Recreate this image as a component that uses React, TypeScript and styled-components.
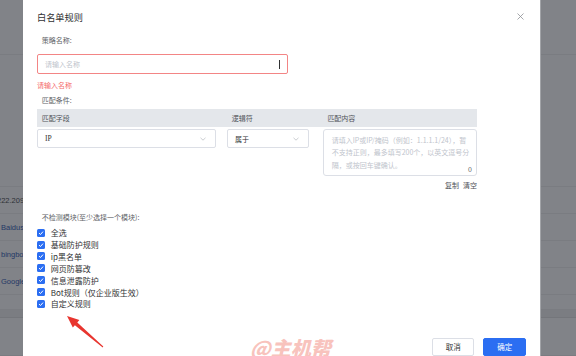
import React from "react";
import styled, { createGlobalStyle } from "styled-components";

const GlobalStyle = createGlobalStyle`
  html, body { margin: 0; padding: 0; }
  body {
    font-family: "Noto Sans CJK SC", "Noto Sans", sans-serif;
  }
  * { box-sizing: border-box; }
`;

const Page = styled.div`
  position: relative;
  display: flex;
  width: 576px;
  height: 356px;
  overflow: hidden;
  background: #818388;
`;

const Backdrop = styled.div<{ $w?: number; $edge?: boolean }>`
  flex: ${(p) => (p.$w ? `0 0 ${p.$w}px` : "1 1 auto")};
  display: flex;
  flex-direction: column;
  overflow: hidden;
  border-left: ${(p) => (p.$edge ? "1.5px solid #a2a4a8" : "none")};
`;

const BgRow = styled.div<{ $h: number; $dark?: boolean }>`
  flex: 0 0 ${(p) => p.$h}px;
  display: flex;
  align-items: center;
  gap: 2px;
  border-bottom: 1px solid rgba(0, 0, 0, 0.05);
  background: ${(p) => (p.$dark ? "rgba(0,0,0,0.04)" : "transparent")};
  font-family: "Liberation Sans", Arial, sans-serif;
  font-size: 7.5px;
  white-space: nowrap;
`;

const BgText = styled.span<{ $link?: boolean }>`
  color: ${(p) => (p.$link ? "#243866" : "#2e3136")};
  margin-left: ${(p) => (p.$link ? "0" : "-3px")};
`;

const BgIcon = styled.span`
  display: inline-block;
  width: 5px;
  height: 6px;
  margin-left: -3px;
  border: 1px solid #2a4c9a;
  border-radius: 1px;
`;

const Modal = styled.div`
  flex: 0 0 517px;
  display: flex;
  flex-direction: column;
  background: #ffffff;
  padding: 10px 14px 0 14px;
`;

const TitleRow = styled.div`
  display: flex;
  align-items: center;
  justify-content: space-between;
  height: 15px;
`;

const Title = styled.div`
  font-size: 9.2px;
  line-height: 15px;
  color: #303133;
`;

const CloseBtn = styled.span`
  display: inline-flex;
  width: 7px;
  height: 7px;
  margin: -3px 2px 0 0;
`;

const FieldLabel = styled.div<{ $mt: number }>`
  margin-top: ${(p) => p.$mt}px;
  padding-left: 4.7px;
  font-size: 7px;
  line-height: 10px;
  color: #606266;
`;

const NameInput = styled.div`
  margin-top: 9px;
  width: 251px;
  height: 20px;
  display: flex;
  align-items: center;
  justify-content: space-between;
  padding: 0 7px;
  border: 1px solid #f38585;
  border-radius: 2px;
`;

const Placeholder = styled.span`
  font-size: 7px;
  color: #c0c4cc;
`;

const Caret = styled.span`
  width: 1px;
  height: 9px;
  background: #303133;
`;

const ErrorText = styled.div`
  margin-top: 5.5px;
  font-size: 7px;
  line-height: 10px;
  color: #f56c6c;
`;

const Grid = styled.div`
  display: grid;
  grid-template-columns: 190px 95.7px 154.3px;
  width: 440px;
`;

const HeaderGrid = styled(Grid)`
  margin-top: 4px;
  height: 18px;
  align-items: center;
  background: #e4e7eb;
`;

const HeaderCell = styled.div`
  padding-left: 4.7px;
  font-size: 7px;
  color: #51545a;
`;

const RowGrid = styled(Grid)`
  margin-top: 2px;
  align-items: start;
`;

const Select = styled.div<{ $w: number }>`
  width: ${(p) => p.$w}px;
  height: 19px;
  display: flex;
  align-items: center;
  justify-content: space-between;
  padding: 0 9.5px 0 7px;
  border: 1px solid #dcdfe6;
  border-radius: 2px;
  font-size: 7px;
  color: #303133;
`;

const SerifValue = styled.span`
  font-family: "Liberation Serif", "Noto Sans CJK SC", serif;
  font-size: 7.5px;
`;

const ContentBox = styled.div`
  position: relative;
  height: 47px;
  padding: 3.5px 4px 0 8px;
  border: 1px solid #dcdfe6;
  border-radius: 3px;
`;

const HintLine = styled.div`
  font-size: 7px;
  line-height: 12.5px;
  color: #c0c4cc;
  white-space: nowrap;
`;

const Counter = styled.span`
  position: absolute;
  right: 4px;
  bottom: 1px;
  font-size: 7px;
  line-height: 10px;
  color: #606266;
`;

const Actions = styled.div`
  width: 440px;
  margin-top: 4px;
  display: flex;
  justify-content: flex-end;
  gap: 4px;
  font-size: 7px;
  line-height: 10px;
  color: #4d5056;
`;

const CheckList = styled.div`
  margin-top: 5px;
  display: flex;
  flex-direction: column;
`;

const CheckRow = styled.div`
  height: 11.9px;
  display: flex;
  align-items: center;
  gap: 5.5px;
  padding-left: 0.3px;
`;

const Box = styled.span`
  width: 8px;
  height: 8px;
  display: inline-flex;
  align-items: center;
  justify-content: center;
  background: #2b6ef2;
  border-radius: 1.5px;
`;

const CheckLabel = styled.span`
  font-size: 8px;
  color: #303133;
  white-space: nowrap;
`;

const Footer = styled.div`
  margin-top: 27.6px;
  display: flex;
  justify-content: flex-end;
  gap: 9px;
`;

const Button = styled.button<{ $primary?: boolean; $w: number }>`
  width: ${(p) => p.$w}px;
  height: 18px;
  padding: 0;
  font-family: inherit;
  font-size: 7.5px;
  border-radius: 2px;
  border: 1px solid ${(p) => (p.$primary ? "#2b6ef2" : "#dcdfe6")};
  background: ${(p) => (p.$primary ? "#2b6ef2" : "#ffffff")};
  color: ${(p) => (p.$primary ? "#ffffff" : "#303133")};
`;

const Watermark = styled.div`
  position: absolute;
  left: 250px;
  top: 337px;
  font-size: 20px;
  line-height: 22px;
  font-weight: 900;
  font-style: italic;
  color: #f8c3bd;
  white-space: nowrap;
  pointer-events: none;
`;

const ArrowSvg = styled.svg`
  position: absolute;
  left: 60px;
  top: 310px;
  pointer-events: none;
`;

const Chevron = () => (
  <svg width="6" height="4" viewBox="0 0 6 4">
    <path d="M0.5 0.8 L3 3.2 L5.5 0.8" fill="none" stroke="#b4b7bd" strokeWidth="0.7" />
  </svg>
);

const CheckMark = () => (
  <svg width="6" height="6" viewBox="0 0 6 6">
    <path d="M1 3.1 L2.5 4.5 L5 1.6" fill="none" stroke="#fff" strokeWidth="1" />
  </svg>
);

const modules = [
  "全选",
  "基础防护规则",
  "ip黑名单",
  "网页防篡改",
  "信息泄露防护",
  "Bot规则（仅企业版生效）",
  "自定义规则",
];

const bgRows: { h: number; text?: string; link?: boolean; dark?: boolean }[] = [
  { h: 55 },
  { h: 132 },
  { h: 27, text: "222.209.14" },
  { h: 27, text: "Baiduspider", link: true },
  { h: 27, text: "bingbot", link: true },
  { h: 27, text: "Googlebot", link: true },
  { h: 15 },
  { h: 8, dark: true },
  { h: 38 },
];

export default function App() {
  return (
    <>
      <GlobalStyle />
      <Page>
        <Backdrop $w={23}>
          {bgRows.map((r, i) => (
            <BgRow key={i} $h={r.h} $dark={r.dark}>
              {r.link && <BgIcon />}
              {r.text && <BgText $link={r.link}>{r.text}</BgText>}
            </BgRow>
          ))}
        </Backdrop>

        <Modal>
          <TitleRow>
            <Title>白名单规则</Title>
            <CloseBtn>
              <svg width="7" height="7" viewBox="0 0 7 7">
                <path d="M0.5 0.5 L6.5 6.5 M6.5 0.5 L0.5 6.5" stroke="#8e9196" strokeWidth="0.8" />
              </svg>
            </CloseBtn>
          </TitleRow>

          <FieldLabel $mt={10}>策略名称:</FieldLabel>
          <NameInput>
            <Placeholder>请输入名称</Placeholder>
            <Caret />
          </NameInput>
          <ErrorText>请输入名称</ErrorText>

          <FieldLabel $mt={5.5}>匹配条件:</FieldLabel>
          <HeaderGrid>
            <HeaderCell>匹配字段</HeaderCell>
            <HeaderCell>逻辑符</HeaderCell>
            <HeaderCell>匹配内容</HeaderCell>
          </HeaderGrid>
          <RowGrid>
            <Select $w={179}>
              <SerifValue>IP</SerifValue>
              <Chevron />
            </Select>
            <Select $w={82}>
              <span>属于</span>
              <Chevron />
            </Select>
            <ContentBox>
              <HintLine>请填入IP或IP/掩码（例如：1.1.1.1/24），暂</HintLine>
              <HintLine>不支持正则，最多填写200个，以英文逗号分</HintLine>
              <HintLine>隔，或按回车键确认。</HintLine>
              <Counter>0</Counter>
            </ContentBox>
          </RowGrid>
          <Actions>
            <span>复制</span>
            <span>清空</span>
          </Actions>

          <FieldLabel $mt={21.7}>不检测模块(至少选择一个模块):</FieldLabel>
          <CheckList>
            {modules.map((m) => (
              <CheckRow key={m}>
                <Box>
                  <CheckMark />
                </Box>
                <CheckLabel>{m}</CheckLabel>
              </CheckRow>
            ))}
          </CheckList>

          <Footer>
            <Button $w={42}>取消</Button>
            <Button $w={42.7} $primary>
              确定
            </Button>
          </Footer>
        </Modal>

        <Backdrop $edge>
          {bgRows.map((r, i) => (
            <BgRow key={i} $h={r.h} $dark={r.dark} />
          ))}
        </Backdrop>

        <ArrowSvg width="50" height="46" viewBox="0 0 50 46">
          <polygon
            points="7,6 19.4,10 17.3,12.4 43.3,36.6 42.7,37.4 14.9,15.2 12.8,17.6"
            fill="#e8352f"
          />
        </ArrowSvg>
        <Watermark>@主机帮</Watermark>
      </Page>
    </>
  );
}
